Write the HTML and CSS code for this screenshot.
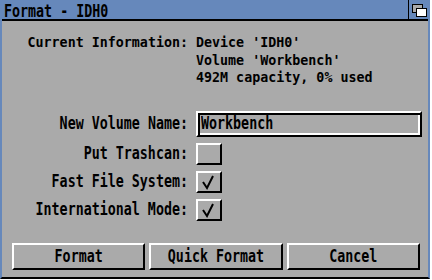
FILE: index.html
```html
<!DOCTYPE html>
<html lang="en">
<head>
  <meta charset="UTF-8" />
  <title>Format - IDH0</title>
  <link rel="stylesheet" href="styles.css">
</head>
<body>
  <div class="window">
    <div class="titlebar">
      <div class="title"><span class="txt">Format - IDH0</span></div>
      <div class="depth">
        <svg width="19" height="19" viewBox="0 0 19 19">
          <rect x="3.5" y="4.5" width="10" height="8" fill="#aaaaaa" stroke="#000"/>
          <rect x="7.5" y="8.5" width="10" height="8" fill="#fff" stroke="#000"/>
        </svg>
      </div>
    </div>

    <div class="info">
      <div class="label txt">Current Information:</div>
      <div class="values txt">Device 'IDH0'<br>Volume 'Workbench'<br>492M capacity, 0% used</div>
    </div>

    <div class="form">
      <div class="label txt">New Volume Name:</div>
      <div class="field"><span class="txt">Workbench</span></div>

      <div class="label txt">Put Trashcan:</div>
      <div class="check"></div>

      <div class="label txt">Fast File System:</div>
      <div class="check">
        <svg width="22" height="18" viewBox="0 0 22 18"><polyline points="5,9 9,15 15,3" fill="none" stroke="#000" stroke-width="2"/></svg>
      </div>

      <div class="label txt">International Mode:</div>
      <div class="check">
        <svg width="22" height="18" viewBox="0 0 22 18"><polyline points="5,9 9,15 15,3" fill="none" stroke="#000" stroke-width="2"/></svg>
      </div>
    </div>

    <div class="buttons">
      <div class="button"><span class="txt">Format</span></div>
      <div class="button"><span class="txt">Quick Format</span></div>
      <div class="button"><span class="txt">Cancel</span></div>
    </div>
  </div>
</body>
</html>
```

FILE: styles.css
```css
body {
  margin: 0;
  background: #fff;
  font-family: "DejaVu Sans Mono", monospace;
  font-size: 13.33px;
  font-weight: bold;
  color: #000;
}

/* topaz-like tall glyphs */
.txt {
  display: block;
  line-height: 13px;
  white-space: pre;
  transform: scaleY(1.3);
}

.window {
  width: 430px;
  height: 279px;
  box-sizing: border-box;
  background: #aaaaaa;
  border-left: 2px solid #6688bb;
  border-right: 2px solid #6688bb;
  border-bottom: 2px solid #000;
  display: flex;
  flex-direction: column;
}

.titlebar {
  height: 19px;
  background: #6688bb;
  border-bottom: 2px solid #000;
  display: flex;
}

.title {
  flex: 1;
  display: flex;
  align-items: center;
  padding: 3px 0 0 2px;
}

.depth {
  width: 19px;
  border-left: 1px solid #000;
}

.depth svg {
  display: block;
}

.info {
  display: grid;
  grid-template-columns: 186px 1fr;
  column-gap: 8px;
  align-items: start;
  margin-top: 13px;
}

/* stacked lines: keep them a little flatter so they don't collide */
.info .txt {
  line-height: 15.6px;
  transform: scaleY(1.12);
  transform-origin: 50% 0;
}

.label {
  justify-self: stretch;
  text-align: right;
}

.form {
  display: grid;
  grid-template-columns: 186px auto;
  column-gap: 8px;
  row-gap: 6px;
  align-items: center;
  justify-items: start;
  margin-top: 30px;
}

.field {
  width: 226px;
  height: 26px;
  box-sizing: border-box;
  border-top: 2px solid #fff;
  border-left: 2px solid #fff;
  border-bottom: 2px solid #000;
  border-right: 2px solid #000;
  box-shadow: inset 2px 2px 0 #000, inset -2px -2px 0 #fff;
  display: flex;
  align-items: center;
  padding-left: 3px;
}

.check {
  width: 26px;
  height: 22px;
  box-sizing: border-box;
  border-top: 2px solid #fff;
  border-left: 2px solid #fff;
  border-bottom: 2px solid #000;
  border-right: 2px solid #000;
}

.check svg {
  display: block;
}

.buttons {
  display: grid;
  grid-template-columns: repeat(3, 1fr);
  column-gap: 4px;
  margin: 22px 8px 0 10px;
}

.button {
  height: 27px;
  box-sizing: border-box;
  border-top: 2px solid #fff;
  border-left: 2px solid #fff;
  border-bottom: 2px solid #000;
  border-right: 2px solid #000;
  display: flex;
  align-items: center;
  justify-content: center;
}
```
